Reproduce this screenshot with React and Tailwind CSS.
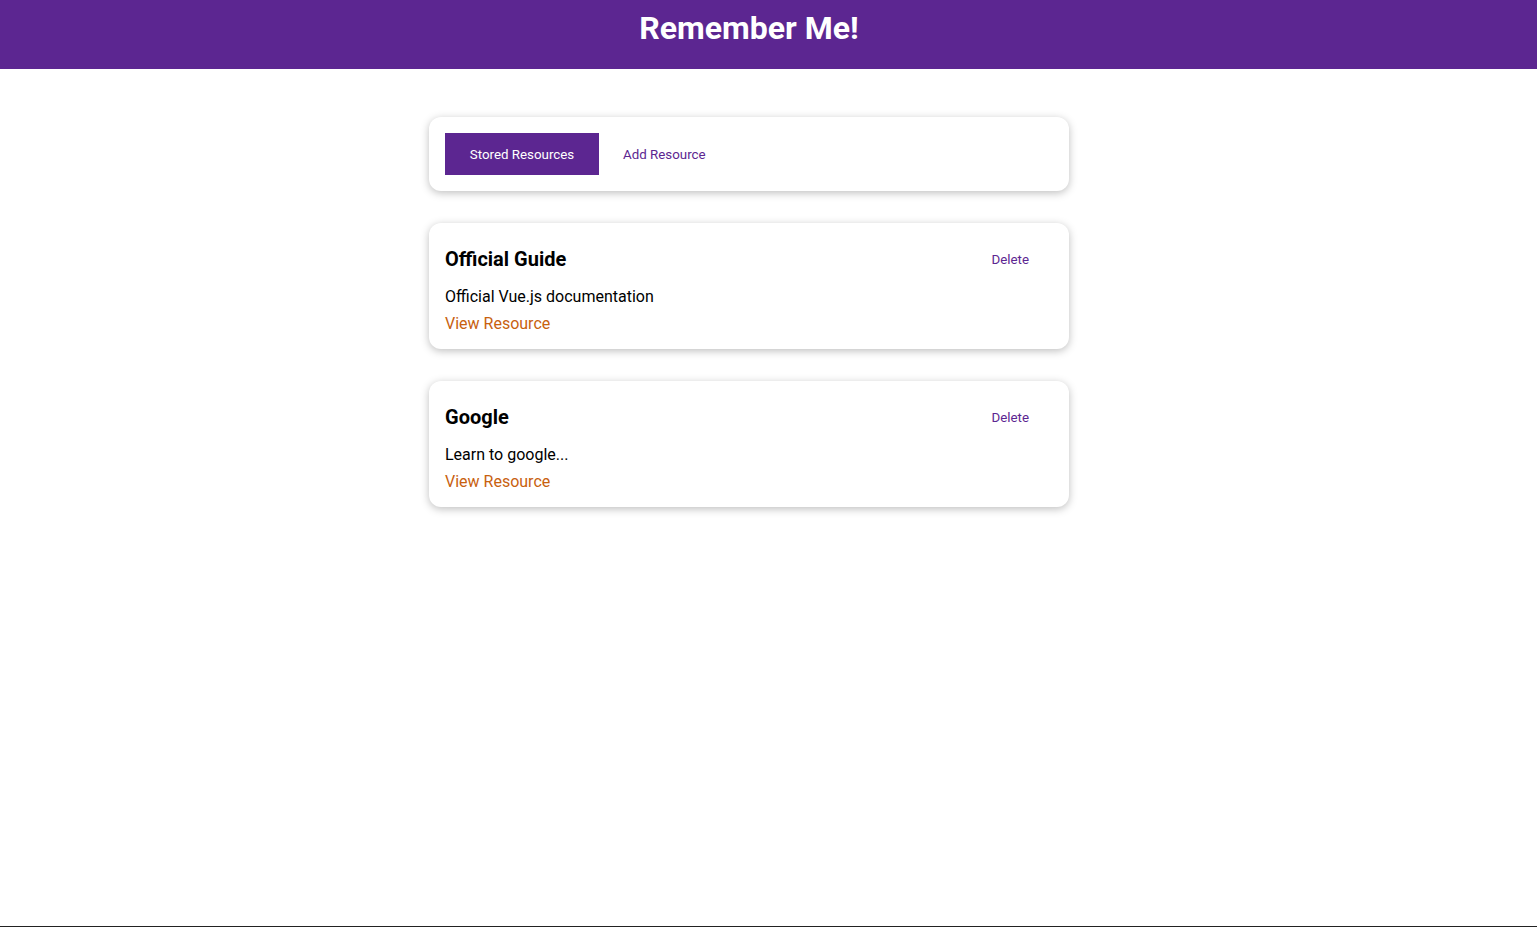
import React from 'react';

const resources = [
  { id: 'official-guide', title: 'Official Guide', description: 'Official Vue.js documentation' },
  { id: 'google', title: 'Google', description: 'Learn to google...' },
];

const ResourceItem = ({ title, description }) => (
  <li className="bg-white rounded-xl shadow-[0_2px_8px_rgba(0,0,0,0.26)] px-4 pt-4 pb-[13px]">
    <header className="flex items-center justify-between h-10">
      <h3 className="text-[20px] font-bold text-black">{title}</h3>
      <button className="h-10 pt-[2px] px-6 text-[13.333px] text-[#5c2691]">Delete</button>
    </header>
    <p className="mt-[6px] text-base leading-6 text-black">{description}</p>
    <a href="#" className="block mt-[3px] text-base leading-6 text-[#c8610f]">
      View Resource
    </a>
  </li>
);

export default function App() {
  return (
    <div className="min-h-screen box-border border-b border-[#222] bg-white font-['Roboto',sans-serif]">
      <header className="h-[69px] bg-[#5c2691]">
        <div className="w-[1498px] flex justify-center">
          <h1 className="text-[32px] font-bold text-white leading-[57px]">Remember Me!</h1>
        </div>
      </header>

      <div className="w-[1498px]">
        <main className="w-[640px] mx-auto mt-12">
          <div className="bg-white rounded-xl shadow-[0_2px_8px_rgba(0,0,0,0.26)] p-4 flex">
            <button className="h-[42px] w-[154px] pt-[2px] bg-[#5c2691] text-white text-[13.333px]">Stored Resources</button>
            <button className="h-[42px] pt-[2px] px-6 text-[#5c2691] text-[13.333px]">Add Resource</button>
          </div>

          <ul className="mt-8 flex flex-col gap-8">
            {resources.map((r) => (
              <ResourceItem key={r.id} title={r.title} description={r.description} />
            ))}
          </ul>
        </main>
      </div>
    </div>
  );
}
